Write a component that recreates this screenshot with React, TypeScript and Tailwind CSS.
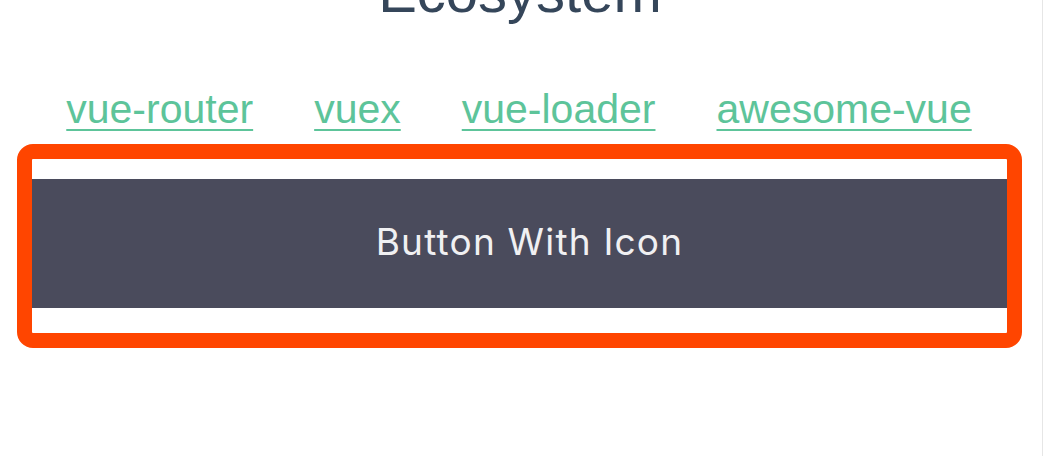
import React from "react";

export default function App() {
  const links = ["vue-router", "vuex", "vue-loader", "awesome-vue"];
  return (
    <div className="relative w-[1044px] h-[456px] overflow-hidden bg-white" style={{ fontFamily: '"Liberation Sans", Arial, sans-serif' }}>
      <div className="w-[1043px] h-full border-r border-[#e6e6e6] flex flex-col items-center">
        <h1 className="mt-[-37px] h-[58px] leading-[58px] text-[58px] font-normal text-[#35465a] ml-[-2px]">Ecosystem</h1>
        <div className="mt-[68px] flex justify-center gap-[61px] h-[40px] leading-[40px] text-[41px] text-[#5dc49a] ml-[-4px]">
          {links.map((l) => (
            <a key={l} href="#" className="underline decoration-[2px] underline-offset-[6px]">
              {l}
            </a>
          ))}
        </div>
        <div className="mt-[15px] self-start ml-[17px] w-[1005px] h-[204px] border-[15px] border-[#ff4500] rounded-[16px] bg-white pt-[20px] pb-[25px] flex flex-col">
          <button className="flex-1 bg-[#4a4b5c] text-[#f0f0f2] flex items-center justify-center pl-[20px] pb-[4px]">
            <span className="text-[37px] leading-[36px] tracking-[1.2px]" style={{ fontFamily: 'Inter, "Liberation Sans", sans-serif' }}>Button With Icon</span>
          </button>
        </div>
      </div>
    </div>
  );
}
